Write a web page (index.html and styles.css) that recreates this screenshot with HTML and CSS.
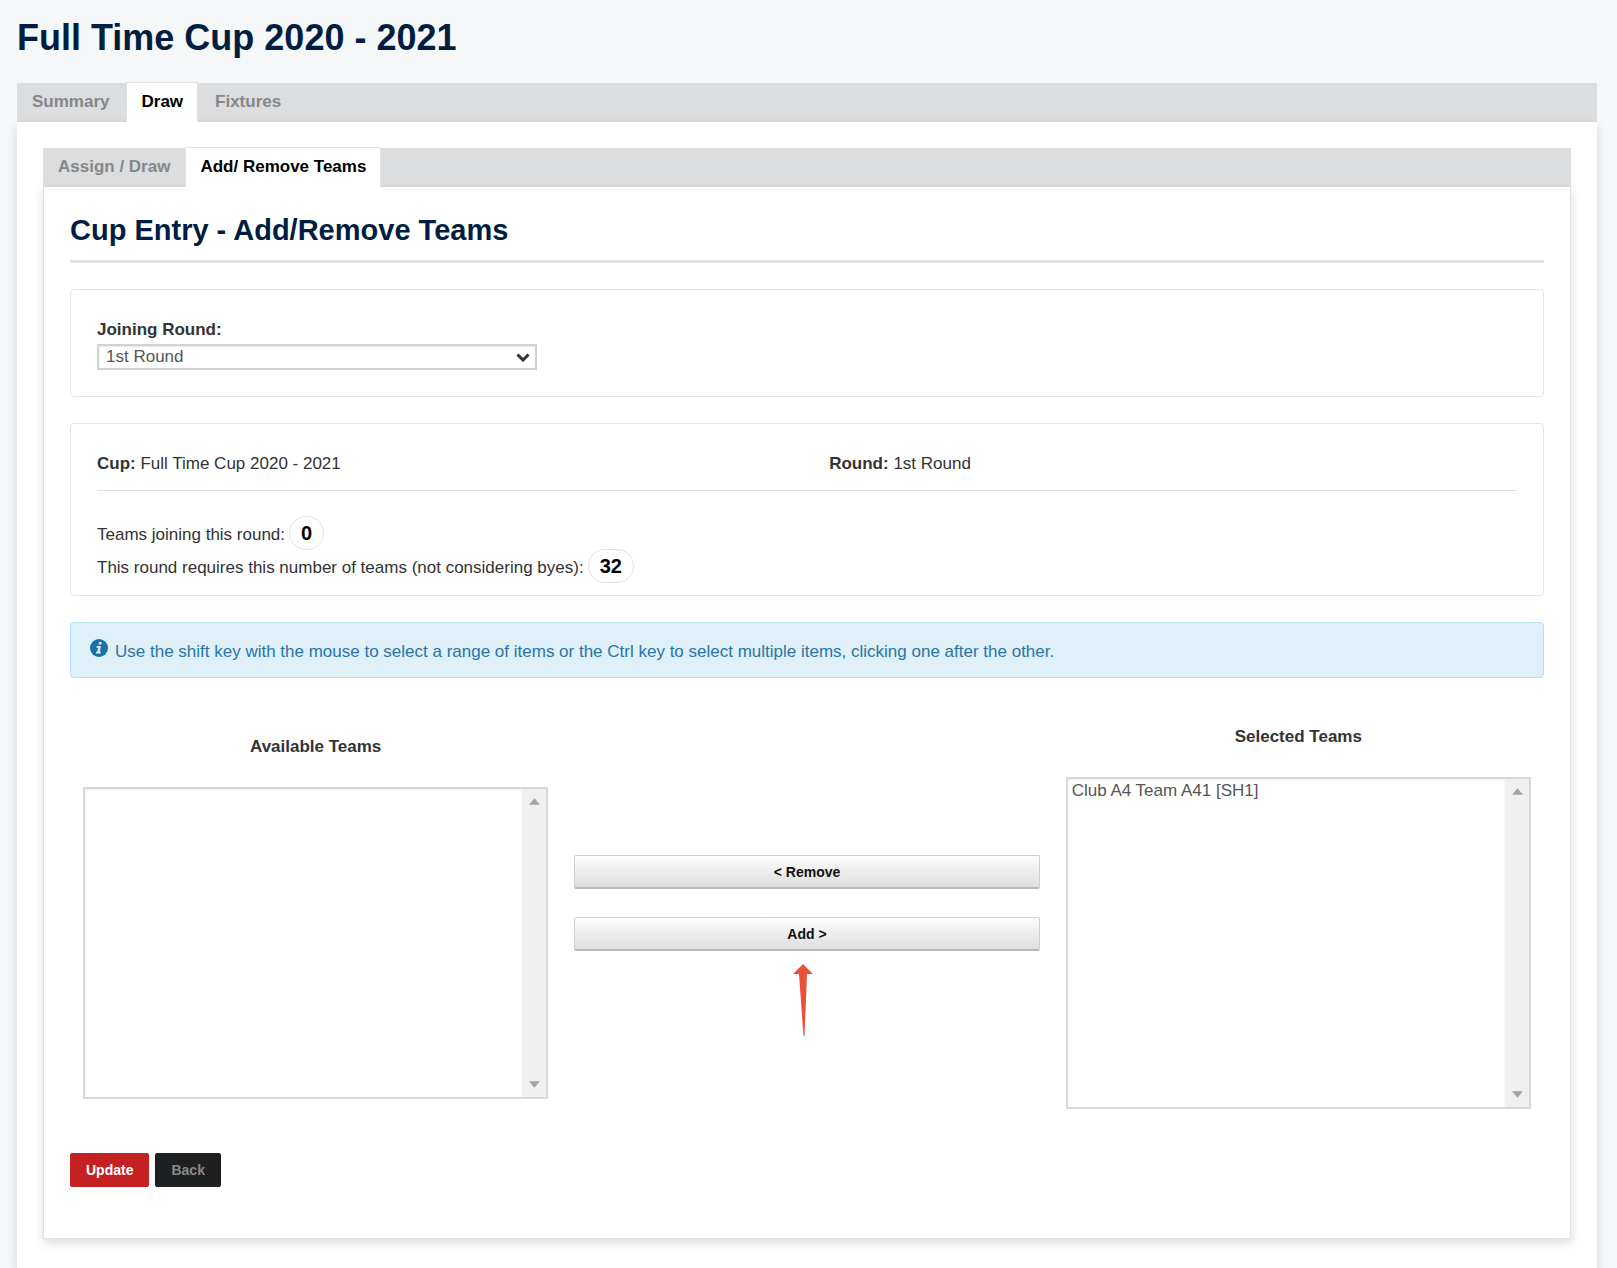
FILE: index.html
```
<!DOCTYPE html>
<html lang="en">
<head>
  <meta charset="UTF-8">
  <meta name="viewport" content="width=device-width, initial-scale=1.0">
  <title>Full Time Cup 2020 - 2021</title>
  <link rel="stylesheet" href="styles.css">
</head>
<body>
  <h1>Full Time Cup 2020 - 2021</h1>

  <nav class="tabs main-tabs">
    <a href="#">Summary</a>
    <a href="#" class="active">Draw</a>
    <a href="#">Fixtures</a>
  </nav>

  <main class="panel outer">
    <nav class="tabs sub-tabs">
      <a href="#">Assign / Draw</a>
      <a href="#" class="active">Add/ Remove Teams</a>
    </nav>

    <form class="panel inner">
      <h2>Cup Entry - Add/Remove Teams</h2>

      <div class="box">
        <label class="bold" for="round">Joining Round:</label>
        <div class="select">
          <select id="round" name="round">
            <option>1st Round</option>
          </select>
          <svg class="chevron" viewBox="0 0 14 9"><path d="M1.5 1.5 L7 7 L12.5 1.5"></path></svg>
        </div>
      </div>

      <div class="box info">
        <div class="info-row">
          <div><b>Cup:</b> Full Time Cup 2020 - 2021</div>
          <div><b>Round:</b> 1st Round</div>
        </div>
        <div class="count">Teams joining this round: <span class="pill">0</span></div>
        <div class="count">This round requires this number of teams (not considering byes): <span class="pill">32</span></div>
      </div>

      <div class="alert">
        <svg class="info-icon" viewBox="0 0 18 18">
          <circle cx="9" cy="9" r="9"></circle>
          <path d="M9 3 H11.8 L11.3 5.5 H8.5 Z M6.8 7 H10.9 L9.7 12.6 H10.8 L10.5 14.5 H6 L6.4 12.6 H7.4 L8.2 8.8 H6.5 Z"></path>
        </svg>
        <span>Use the shift key with the mouse to select a range of items or the Ctrl key to select multiple items, clicking one after the other.</span>
      </div>

      <div class="picker">
        <div class="list">
          <label class="bold" for="available">Available Teams</label>
          <div class="listbox short">
            <select id="available" name="available" multiple></select>
            <div class="scrollbar">
              <svg viewBox="0 0 10 6"><path d="M0 6 L5 0 L10 6 Z"></path></svg>
              <svg viewBox="0 0 10 6"><path d="M0 0 L5 6 L10 0 Z"></path></svg>
            </div>
          </div>
        </div>

        <div class="moves">
          <button type="button" class="btn">&lt; Remove</button>
          <button type="button" class="btn">Add &gt;</button>
          <svg class="arrow" viewBox="0 0 20 72"><path d="M10 0 L20 10 H14 L11.5 72 H10.5 L6 10 H0 Z"></path></svg>
        </div>

        <div class="list">
          <label class="bold" for="selected">Selected Teams</label>
          <div class="listbox">
            <select id="selected" name="selected" multiple>
              <option>Club A4 Team A41 [SH1]</option>
            </select>
            <div class="scrollbar">
              <svg viewBox="0 0 10 6"><path d="M0 6 L5 0 L10 6 Z"></path></svg>
              <svg viewBox="0 0 10 6"><path d="M0 0 L5 6 L10 0 Z"></path></svg>
            </div>
          </div>
        </div>
      </div>

      <div class="actions">
        <button type="submit" class="btn update">Update</button>
        <button type="button" class="btn back">Back</button>
      </div>
    </form>
  </main>
</body>
</html>
```
FILE: styles.css
```
* {
  box-sizing: border-box;
}

body {
  margin: 0;
  padding: 16px 20px 0 17px;
  background: #f5f7f9;
  color: #333;
  font-family: "Liberation Sans", Arial, sans-serif;
  font-size: 17px;
  line-height: 24px;
}

h1,
h2 {
  color: #011e41;
  font-weight: bold;
}

h1 {
  margin: 0 0 23px;
  font-size: 36px;
  line-height: 44px;
}

h2 {
  margin: 0 0 26px;
  padding-bottom: 10px;
  border-bottom: 3px solid #e2e2e2;
  font-size: 29px;
  line-height: 40px;
}

.bold {
  font-weight: bold;
}

/* tabs */
.tabs {
  display: flex;
  height: 39px;
  background: #dbddde;
}

.tabs a {
  padding: 6px 14px 0;
  border: 1px solid transparent;
  color: #85878a;
  font-weight: bold;
  text-decoration: none;
}

.tabs .active {
  margin-top: -1px;
  padding-top: 7px;
  border-color: #e0e2e3;
  border-bottom: 0;
  background: #fff;
  color: #000;
}

.main-tabs {
  gap: 2px;
}

/* panels */
.panel {
  background: #fff;
  box-shadow: 0 4px 10px rgba(0, 0, 0, 0.14);
}

.outer {
  padding: 26px 26px 30px;
}

.inner {
  padding: 23px 26px 51px;
  border: 1px solid #e2e2e2;
  border-top: 0;
}

.box {
  margin-bottom: 26px;
  padding: 26px;
  border: 1px solid #e6e6e6;
  border-radius: 4px;
}

.box label {
  display: block;
  line-height: 28px;
}

.select {
  position: relative;
  width: 31%;
}

.select select {
  display: block;
  appearance: none;
  width: 100%;
  height: 26px;
  padding: 0 7px;
  border: 2px solid #d2d2d2;
  border-radius: 0;
  background: #fff;
  box-shadow: inset 0 1px 2px rgba(0, 0, 0, 0.1);
  color: #555;
  font: inherit;
  line-height: 22px;
}

.chevron {
  position: absolute;
  top: 9px;
  right: 7px;
  width: 14px;
  height: 9px;
  fill: none;
  stroke: #333;
  stroke-width: 3;
  pointer-events: none;
}

.info {
  padding-bottom: 12px;
}

.info-row {
  display: flex;
  margin-bottom: 26px;
  padding: 2px 0 14px;
  border-bottom: 1px solid #e2e2e2;
}

.info-row div {
  flex: 0 0 51%;
}

.info-row div + div {
  padding-left: 8px;
}

.count {
  display: flex;
  gap: 4px;
  align-items: center;
  height: 33px;
  padding-top: 2px;
}

.pill {
  margin-top: -3px;
  padding: 4px 11px;
  border: 1px solid #e2e2e2;
  border-radius: 17px;
  color: #000;
  font-size: 20px;
  font-weight: bold;
}

.alert {
  display: flex;
  gap: 7px;
  align-items: center;
  height: 56px;
  margin-bottom: 47px;
  padding: 4px 19px 0;
  border: 1px solid #b8def2;
  border-radius: 4px;
  background: #dff0f8;
  color: #2a75a6;
}

.info-icon {
  width: 18px;
  height: 18px;
  margin-bottom: 8px;
  fill: #1a70a8;
}

.info-icon path {
  fill: #dff0f8;
}

/* team picker */
.picker {
  display: grid;
  grid-template-columns: repeat(3, 1fr);
  gap: 26px;
  align-items: center;
  padding: 0 13px;
}

.list label {
  display: block;
  margin-bottom: 28px;
  text-align: center;
}

.listbox {
  display: flex;
  height: 332px;
  border: 2px solid #d8d8d8;
}

.listbox.short {
  height: 312px;
}

.listbox select {
  flex: 1;
  min-width: 0;
  padding: 2px;
  border: 0;
  background: #fff;
  box-shadow: inset 0 1px 2px rgba(0, 0, 0, 0.08);
  color: #555;
  font: inherit;
  overflow: hidden;
}

.scrollbar {
  display: flex;
  flex-direction: column;
  justify-content: space-between;
  align-items: center;
  width: 24px;
  padding: 9px 0;
  background: #f0f0f0;
}

.scrollbar svg {
  width: 11px;
  height: 7px;
  fill: #a3a3a3;
}

.btn {
  height: 34px;
  padding: 0 15px;
  border: 1px solid #d0d0d0;
  border-bottom: 2px solid #b8b8b8;
  border-radius: 2px;
  background: linear-gradient(#fcfcfc, #dedede);
  color: #111;
  font: bold 14px "Liberation Sans", Arial, sans-serif;
}

.moves {
  position: relative;
}

.moves .btn {
  display: block;
  width: 100%;
  margin-bottom: 28px;
}

.arrow {
  position: absolute;
  left: 47%;
  bottom: -57px;
  width: 20px;
  height: 72px;
  fill: #e8503a;
}

.actions {
  display: flex;
  gap: 6px;
  margin-top: 44px;
}

.update {
  border: 1px solid #c62121;
  background: #c62121;
  color: #fff;
}

.back {
  border: 1px solid #1d1f20;
  background: #1d1f20;
  color: #888;
}
```
